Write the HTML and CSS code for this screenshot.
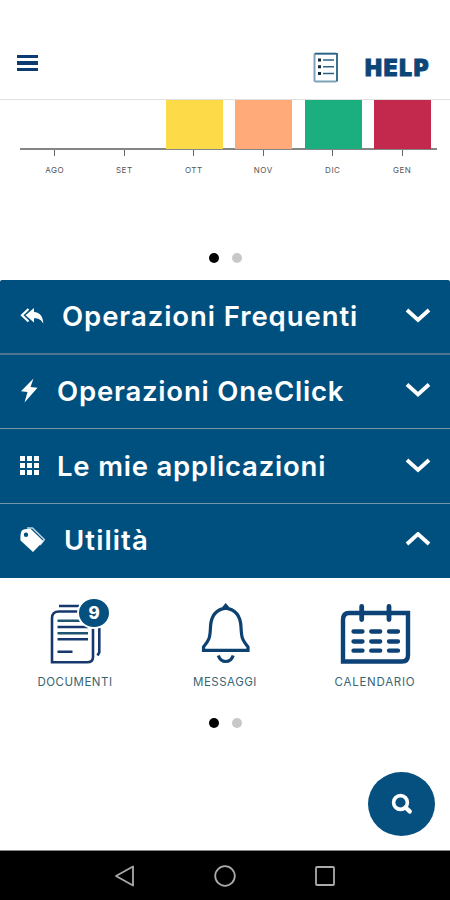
FILE: index.html
```
<!DOCTYPE html>
<html lang="it">

<head>
    <meta charset="UTF-8">
    <meta name="viewport" content="width=device-width, initial-scale=1.0">
    <title>Home</title>
    <link rel="stylesheet" href="styles.css">
</head>

<body>

    <header class="header">
        <button class="menu" aria-label="Menu">
            <span></span>
            <span></span>
            <span></span>
        </button>
        <svg class="list_icon" width="26" height="32" viewBox="0 0 26 32">
            <rect x="1.5" y="1.5" width="22.5" height="28" rx="1.5" fill="#fff" stroke="#7fa3b8" stroke-width="2" />
            <path d="M2 1.7H24V29" fill="none" stroke="#2b6285" stroke-width="1.6" />
            <path d="M10 8H21M10 14.7H21M10 21.5H21" stroke="#2b6285" stroke-width="1.5" />
            <path d="M5 8H8M5 14.7H8M5 21.5H8" stroke="#10273c" stroke-width="3" />
        </svg>
        <b class="help">HELP</b>
    </header>

    <section class="chart">
        <div class="bars">
            <div class="col"></div>
            <div class="col"></div>
            <div class="col"><div class="bar yellow"></div></div>
            <div class="col"><div class="bar orange"></div></div>
            <div class="col"><div class="bar green"></div></div>
            <div class="col"><div class="bar red"></div></div>
        </div>
        <div class="months">
            <span>AGO</span>
            <span>SET</span>
            <span>OTT</span>
            <span>NOV</span>
            <span>DIC</span>
            <span>GEN</span>
        </div>
    </section>

    <div class="dots">
        <i class="dot active"></i>
        <i class="dot"></i>
    </div>

    <main class="accordion">
        <div class="panel first">
            <svg class="icon reply" width="24" height="18" viewBox="0 0 24 18">
                <path d="M8.5 2L2 8.300L8.5 14.5" fill="none" stroke="#fff" stroke-width="2.2" />
                <path d="M5.5 8.300L14 1V5C20 5.300 23 9.5 23.300 16.5C21 12.5 18.5 11.2 14 11.2V15.5Z" fill="#fff" />
            </svg>
            <span class="title t1">Operazioni Frequenti</span>
            <svg class="chevron" width="26" height="16" viewBox="0 0 26 16"><path d="M2 2L13 12L24 2" /></svg>
        </div>
        <div class="panel second">
            <svg class="icon bolt" width="18" height="26" viewBox="0 0 18 26">
                <path d="M13.5 0.5L1 13.3L7.5 14L4.5 24.5L17.5 9.7L10.5 9Z" fill="#fff" />
            </svg>
            <span class="title t2">Operazioni OneClick</span>
            <svg class="chevron" width="26" height="16" viewBox="0 0 26 16"><path d="M2 1.500L13 11.500L24 1.500" /></svg>
        </div>
        <div class="panel third">
            <svg class="icon apps" width="20" height="20" viewBox="0 0 20 20">
                <path d="M0 2.500H5M7 2.500H12M14 2.500H19M0 9.500H5M7 9.500H12M14 9.500H19M0 16.500H5M7 16.500H12M14 16.500H19" stroke="#fff" stroke-width="4.8" />
            </svg>
            <span class="title t3">Le mie applicazioni</span>
            <svg class="chevron" width="26" height="16" viewBox="0 0 26 16"><path d="M2 2L13 12L24 2" /></svg>
        </div>
        <div class="panel fourth">
            <svg class="icon tag" width="26" height="27" viewBox="0 0 26 27">
                <path d="M7 1H12.500L24.300 12.5L20 18" fill="none" stroke="#b9cfe0" stroke-width="1.7" stroke-linejoin="round" />
                <path fill-rule="evenodd" d="M2 3.500Q4 1.500 10.500 1.800L23.5 14.200L13 25L0.5 13.5Q0 5.500 2 3.500ZM6 5.500A2.2 2.2 0 1 0 6 9.900A2.2 2.2 0 1 0 6 5.500Z" fill="#fff" />
            </svg>
            <span class="title t4">Utilità</span>
            <svg class="chevron" width="26" height="16" viewBox="0 0 26 16"><path d="M2 12L13 2L24 12" /></svg>
        </div>
    </main>

    <section class="tools">
        <div class="tool">
            <svg width="60" height="64" viewBox="0 0 60 64" fill="none" stroke="#17386f" stroke-width="2.6">
                <path d="M14 5H34M7 62.500V17Q7 10.500 14 10.500H46Q48 10.500 48 13V56Q48 61.300 42 61.300H7M54.300 27V51.500L52.500 54.500" />
                <path d="M12.500 19.7H40M12.500 32.300H43" stroke="#1f5573" />
                <path d="M12.500 26H43M12.500 38.300H43M12.500 50.7H27.500" />
            </svg>
            <span class="badge">9</span>
            <span class="label doc">DOCUMENTI</span>
        </div>
        <div class="tool">
            <svg width="60" height="64" viewBox="0 0 60 64" fill="none" stroke="#0d4270" stroke-width="3.2">
                <path d="M8.500 49.400H53V46C47 38.500 46.500 37 46 26C45.500 14 40 8.500 30.700 7.200C21.500 8.500 16 14 15.500 26C15 37 14.500 38.500 8.500 46Z" />
                <path d="M28.500 7L30.700 4.500L33 7" />
                <path d="M23.300 54.500C26 62.500 35.500 62.500 38.200 54.500" />
            </svg>
            <span class="label msg">MESSAGGI</span>
        </div>
        <div class="tool">
            <svg width="72" height="64" viewBox="0 0 72 64" fill="none" stroke="#0c4275">
                <path d="M4 60.500V19Q4 12 10 12H69V54Q69 60.500 63 60.500Z" stroke-width="4.4" />
                <path d="M22.700 5.500V18.500M50 5.500V18.500" stroke-width="4.800" stroke-linecap="round" />
                <path d="M14.500 30.500H23.500M32.200 30.500H41.200M50 30.500H59M14.500 40.500H23.500M32.200 40.500H41.200M50 40.500H59M14.500 49.700H23.500M32.200 49.700H41.200M50 49.700H59" stroke-width="4.300" stroke-linecap="round" />
            </svg>
            <span class="label cal">CALENDARIO</span>
        </div>
    </section>

    <div class="dots">
        <i class="dot active"></i>
        <i class="dot"></i>
    </div>

    <button class="search" aria-label="Cerca">
        <svg width="22" height="22" viewBox="0 0 22 22" fill="none" stroke="#fff">
            <circle cx="9.500" cy="9.500" r="6.900" stroke-width="3.6" />
            <path d="M14.500 14.500L18.700 18.400" stroke-width="4.400" stroke-linecap="round" />
        </svg>
    </button>

    <nav class="navbar">
        <svg width="22" height="24" viewBox="0 0 22 24"><path d="M2 12L19 2.500V21.500Z" /></svg>
        <svg width="24" height="24" viewBox="0 0 24 24"><circle cx="12" cy="12" r="9.800" /></svg>
        <svg width="22" height="24" viewBox="0 0 22 24"><rect x="2" y="3" width="18" height="18" rx="1" /></svg>
    </nav>

</body>

</html>
```
FILE: styles.css
```
* {
    box-sizing: border-box;
}

body {
    margin: 0;
    height: 900px;
    display: flex;
    flex-direction: column;
    position: relative;
    overflow: hidden;
    background: #fff;
    font-family: Inter, "Liberation Sans", sans-serif;
}

button {
    border: 0;
    padding: 0;
    background: none;
}

.header {
    height: 100px;
    padding: 35px 20px 0 17px;
    display: flex;
    align-items: center;
    border-bottom: 1px solid #e0e0e0;
}

.menu {
    width: 21px;
    display: flex;
    flex-direction: column;
    gap: 3px;
    margin: 0 auto 8px 0;
}

.menu span {
    height: 3.5px;
    background: #0b3b70;
}

.list_icon {
    margin: 2px 26px 0 0;
}

.help {
    width: 65px;
    font-size: 22.5px;
    font-weight: 900;
    letter-spacing: 1.8px;
    color: #0b4679;
    -webkit-text-stroke: 1px #0b4679;
}

.chart {
    height: 146px;
    padding: 0 13px 0 20px;
}

.bars {
    display: flex;
    height: 50px;
    border-bottom: 2px solid #858585;
}

.col {
    flex: 1;
    display: flex;
    justify-content: center;
}

.bar {
    width: 57px;
    height: 49px;
    margin-left: 1px;
}

.yellow {
    background: #fcda48;
}

.orange {
    background: #ffaa78;
}

.green {
    background: #1bae7f;
}

.red {
    background: #c3294c;
}

.months {
    display: flex;
}

.months span {
    flex: 1;
    display: flex;
    flex-direction: column;
    align-items: center;
    font-size: 8px;
    letter-spacing: 0.5px;
    line-height: 10px;
    color: #555;
}

.months span::before {
    content: "";
    width: 1px;
    height: 6px;
    margin-bottom: 9px;
    background: #666;
}

.dots {
    height: 24px;
    display: flex;
    align-items: center;
    justify-content: center;
    gap: 13px;
}

.dot {
    width: 10px;
    height: 10px;
    border-radius: 50%;
    background: #c8c8c8;
}

.dot.active {
    background: #000;
}

.accordion {
    margin-top: 10px;
}

.panel {
    height: 74px;
    padding: 0 19px 1px 20px;
    display: flex;
    align-items: center;
    border-bottom: 1px solid #7895aa;
    background: #00507f;
    color: #fff;
}

.first {
    height: 75px;
    border-bottom: 2px solid #4c7591;
    border-radius: 2px 2px 0 0;
}

.third {
    height: 75px;
}

.fourth {
    border-bottom: 0;
    padding-bottom: 2px;
}

.title {
    flex: 1;
    font-size: 27.5px;
    font-weight: 600;
    line-height: 36px;
    white-space: nowrap;
}

.t1 {
    letter-spacing: 0.93px;
}

.t2 {
    letter-spacing: 0.8px;
}

.t3 {
    letter-spacing: 0.8px;
}

.t4 {
    letter-spacing: 1.1px;
}

.reply {
    margin-right: 18px;
}

.bolt {
    margin-right: 19px;
}

.apps {
    margin-right: 17px;
}

.tag {
    margin-right: 18px;
}

.chevron {
    fill: none;
    stroke: #fff;
    stroke-width: 3.8px;
}

.tools {
    height: 133px;
    padding-top: 23px;
    display: flex;
}

.tool {
    flex: 1;
    position: relative;
    display: flex;
    flex-direction: column;
    align-items: center;
}

.label {
    margin-top: 9px;
    font-size: 11.5px;
    line-height: 16px;
    color: #386572;
}

.doc {
    letter-spacing: 0.5px;
}

.msg {
    letter-spacing: 0.5px;
}

.cal {
    letter-spacing: 0.75px;
}

.badge {
    position: absolute;
    left: 77px;
    top: -4px;
    width: 34px;
    height: 32px;
    border: 2px solid #fff;
    border-radius: 50%;
    background: #05507f;
    color: #fff;
    font-size: 17px;
    font-weight: 800;
    line-height: 28px;
    text-align: center;
}

.search {
    position: absolute;
    left: 368px;
    top: 772px;
    width: 67px;
    height: 64px;
    border-radius: 50%;
    background: #05507f;
    display: flex;
    align-items: center;
    justify-content: center;
}

.navbar {
    height: 50px;
    margin-top: auto;
    padding: 0 75px;
    display: flex;
    align-items: center;
    justify-content: space-around;
    border-top: 1px solid #888;
    background: #000;
}

.navbar svg {
    fill: none;
    stroke: #aaa;
    stroke-width: 1.8px;
    stroke-linejoin: round;
}
```
